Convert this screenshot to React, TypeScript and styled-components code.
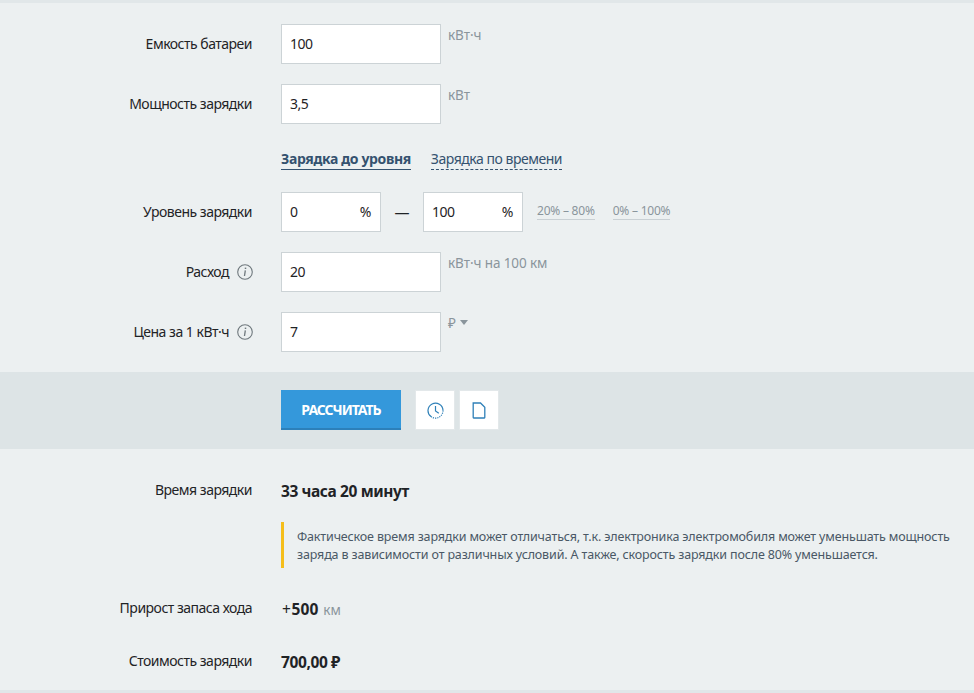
import styled, { createGlobalStyle } from 'styled-components';

const GlobalStyle = createGlobalStyle`
  body {
    margin: 0;
    background: #ecf0f1;
    font-family: 'Noto Sans', 'Open Sans', sans-serif;
    font-size: 14px;
    color: #1f2326;
  }
`;

const Page = styled.div`
  width: 974px;
  height: 693px;
  overflow: hidden;
  border-top: 3px solid #e1e7e9;
  box-sizing: border-box;
`;

const Form = styled.section`
  padding: 21px 0 20px;
  display: flex;
  flex-direction: column;
`;

const Row = styled.div<{ $gap?: number }>`
  display: grid;
  grid-template-columns: 252px 1fr;
  column-gap: 29px;
  margin-bottom: ${(p) => p.$gap ?? 20}px;
  &:last-child {
    margin-bottom: 0;
  }
`;

const Label = styled.div`
  display: flex;
  justify-content: flex-end;
  align-items: center;
  height: 38px;
  gap: 8px;
  letter-spacing: -0.5px;
`;

const Field = styled.div`
  display: flex;
  align-items: flex-start;
`;

const Box = styled.div<{ $w: number }>`
  width: ${(p) => p.$w}px;
  height: 40px;
  box-sizing: border-box;
  background: #fff;
  border: 1px solid #ccd3d6;
  padding: 0 9px 2px 8px;
  display: flex;
  align-items: center;
  justify-content: space-between;
  letter-spacing: -0.5px;
`;

const Unit = styled.span`
  margin: 2px 0 0 7px;
  font-size: 13.5px;
  line-height: 18px;
  color: #8a959c;
  letter-spacing: -0.1px;
  display: flex;
  align-items: center;
  gap: 4px;
`;

const Caret = styled.i`
  width: 0;
  height: 0;
  border-left: 4.5px solid transparent;
  border-right: 4.5px solid transparent;
  border-top: 5px solid #8a959c;
  margin-bottom: 2px;
`;

const Tabs = styled.div`
  display: flex;
  gap: 20px;
  height: 20px;
`;

const Tab = styled.span<{ $active?: boolean }>`
  line-height: 17px;
  height: 19px;
  color: #34526f;
  font-weight: ${(p) => (p.$active ? 700 : 400)};
  letter-spacing: ${(p) => (p.$active ? '-0.36px' : '-0.47px')};
  border-bottom: 1px ${(p) => (p.$active ? 'solid' : 'dashed')} #34526f;
`;

const Dash = styled.span`
  width: 42px;
  height: 40px;
  display: flex;
  align-items: center;
  justify-content: center;
  font-size: 15px;
  color: #1f2326;
`;

const Presets = styled.div`
  display: flex;
  gap: 18px;
  margin: 11px 0 0 14px;
`;

const Preset = styled.span`
  font-size: 12px;
  line-height: 16px;
  color: #8a959c;
  letter-spacing: -0.22px;
  border-bottom: 1px solid #c9d0d4;
`;

const Actions = styled.section`
  background: #dde4e6;
  height: 77px;
  box-sizing: border-box;
  padding: 18px 0 0 281px;
  display: flex;
  align-items: flex-start;
`;

const CalcButton = styled.button`
  width: 120px;
  height: 40px;
  margin-right: 14px;
  border: 0;
  border-bottom: 2px solid #2c80ba;
  background: #3498db;
  color: #fff;
  font: 700 14px 'Noto Sans', sans-serif;
  letter-spacing: -1px;
  padding: 0;
`;

const IconButton = styled.button`
  width: 40px;
  height: 40px;
  margin-right: 4px;
  background: #fff;
  border: 1px solid #e3e8ea;
  padding: 0;
  display: flex;
  align-items: center;
  justify-content: center;
`;

const Results = styled.section`
  padding: 29px 0 0;
`;

const ResultRow = styled.div<{ $gap: number }>`
  display: grid;
  grid-template-columns: 252px 1fr;
  column-gap: 29px;
  margin-bottom: ${(p) => p.$gap}px;
`;

const ResultLabel = styled.div`
  text-align: right;
  line-height: 24px;
  letter-spacing: -0.5px;
`;

const Value = styled.div`
  font-weight: 700;
  font-size: 15.5px;
  line-height: 24px;
  padding-top: 1px;
  letter-spacing: -0.4px;
`;

const Plus = styled.span`
  font-weight: 400;
  margin: 0 1px;
`;

const Amount = styled.span`
  letter-spacing: 0.2px;
`;

const ValueUnit = styled.span`
  font-weight: 400;
  font-size: 13.5px;
  color: #8a959c;
  letter-spacing: 0;
  margin-left: 1px;
`;

const Note = styled.div`
  grid-column: 2;
  margin-bottom: 28px;
  border-left: 3px solid #f5be1b;
  padding: 6px 0 4px 13px;
  font-size: 12.5px;
  line-height: 18px;
  color: #4a5866;
  letter-spacing: -0.15px;
  width: 672px;
  height: 46px;
  box-sizing: border-box;
  white-space: nowrap;
`;

const Spacer = styled.div`
  grid-column: 1;
`;

const Foot = styled.div`
  position: fixed;
  left: 0;
  right: 0;
  bottom: 0;
  height: 3px;
  background: #e1e7e9;
`;

const InfoSvg = styled.svg`
  margin-right: -1px;
  margin-top: 2px;
`;

function InfoIcon() {
  return (
    <InfoSvg width="16" height="16" viewBox="0 0 16 16" fill="none" stroke="#6f787d" strokeWidth="1.1">
      <circle cx="8" cy="8" r="7.3" />
      <path d="M8.5 3.6v1.4" strokeWidth="1.5" />
      <path d="M8.3 6.4 7.5 12" strokeWidth="1.3" />
    </InfoSvg>
  );
}

function ClockIcon() {
  return (
    <svg width="17" height="17" viewBox="0 0 17 17" fill="none" stroke="#2f80b8" strokeWidth="1.2">
      <path d="M4 14.6A7.5 7.5 0 1 1 16 8.5" />
      <path d="M16 8.5A7.5 7.5 0 0 1 4 14.6" strokeDasharray="1.2 1" />
      <path d="M8.5 4v5l3.3 2.2" />
    </svg>
  );
}

function FileIcon() {
  return (
    <svg width="14" height="17" viewBox="0 0 14 17" fill="none" stroke="#2f80b8" strokeWidth="1.3">
      <path d="M1.2 1h7.3l4.3 4.3v10a.8.8 0 0 1-.8.7H2a.8.8 0 0 1-.8-.7z" />
    </svg>
  );
}

export default function App() {
  return (
    <Page>
      <GlobalStyle />
      <Form>
        <Row>
          <Label>Емкость батареи</Label>
          <Field>
            <Box $w={160}>100</Box>
            <Unit>кВт·ч</Unit>
          </Field>
        </Row>
        <Row $gap={26}>
          <Label>Мощность зарядки</Label>
          <Field>
            <Box $w={160}>3,5</Box>
            <Unit>кВт</Unit>
          </Field>
        </Row>
        <Row $gap={22}>
          <div />
          <Tabs>
            <Tab $active>Зарядка до уровня</Tab>
            <Tab>Зарядка по времени</Tab>
          </Tabs>
        </Row>
        <Row>
          <Label>Уровень зарядки</Label>
          <Field>
            <Box $w={100}>
              0<span>%</span>
            </Box>
            <Dash>—</Dash>
            <Box $w={100}>
              100<span>%</span>
            </Box>
            <Presets>
              <Preset>20% – 80%</Preset>
              <Preset>0% – 100%</Preset>
            </Presets>
          </Field>
        </Row>
        <Row>
          <Label>
            Расход <InfoIcon />
          </Label>
          <Field>
            <Box $w={160}>20</Box>
            <Unit>кВт·ч на 100 км</Unit>
          </Field>
        </Row>
        <Row>
          <Label>
            Цена за 1 кВт·ч <InfoIcon />
          </Label>
          <Field>
            <Box $w={160}>7</Box>
            <Unit>
              ₽ <Caret />
            </Unit>
          </Field>
        </Row>
      </Form>
      <Actions>
        <CalcButton>РАССЧИТАТЬ</CalcButton>
        <IconButton>
          <ClockIcon />
        </IconButton>
        <IconButton>
          <FileIcon />
        </IconButton>
      </Actions>
      <Results>
        <ResultRow $gap={19}>
          <ResultLabel>Время зарядки</ResultLabel>
          <Value>33 часа 20 минут</Value>
        </ResultRow>
        <ResultRow $gap={0}>
          <Spacer />
          <Note>
            Фактическое время зарядки может отличаться, т.к. электроника электромобиля может уменьшать мощность
            <br />
            заряда в зависимости от различных условий. А также, скорость зарядки после 80% уменьшается.
          </Note>
        </ResultRow>
        <ResultRow $gap={27}>
          <ResultLabel>Прирост запаса хода</ResultLabel>
          <Value>
            <Plus>+</Plus>
            <Amount>500</Amount> <ValueUnit>км</ValueUnit>
          </Value>
        </ResultRow>
        <ResultRow $gap={0}>
          <ResultLabel>Стоимость зарядки</ResultLabel>
          <Value>700,00 ₽</Value>
        </ResultRow>
      </Results>
      <Foot />
    </Page>
  );
}
